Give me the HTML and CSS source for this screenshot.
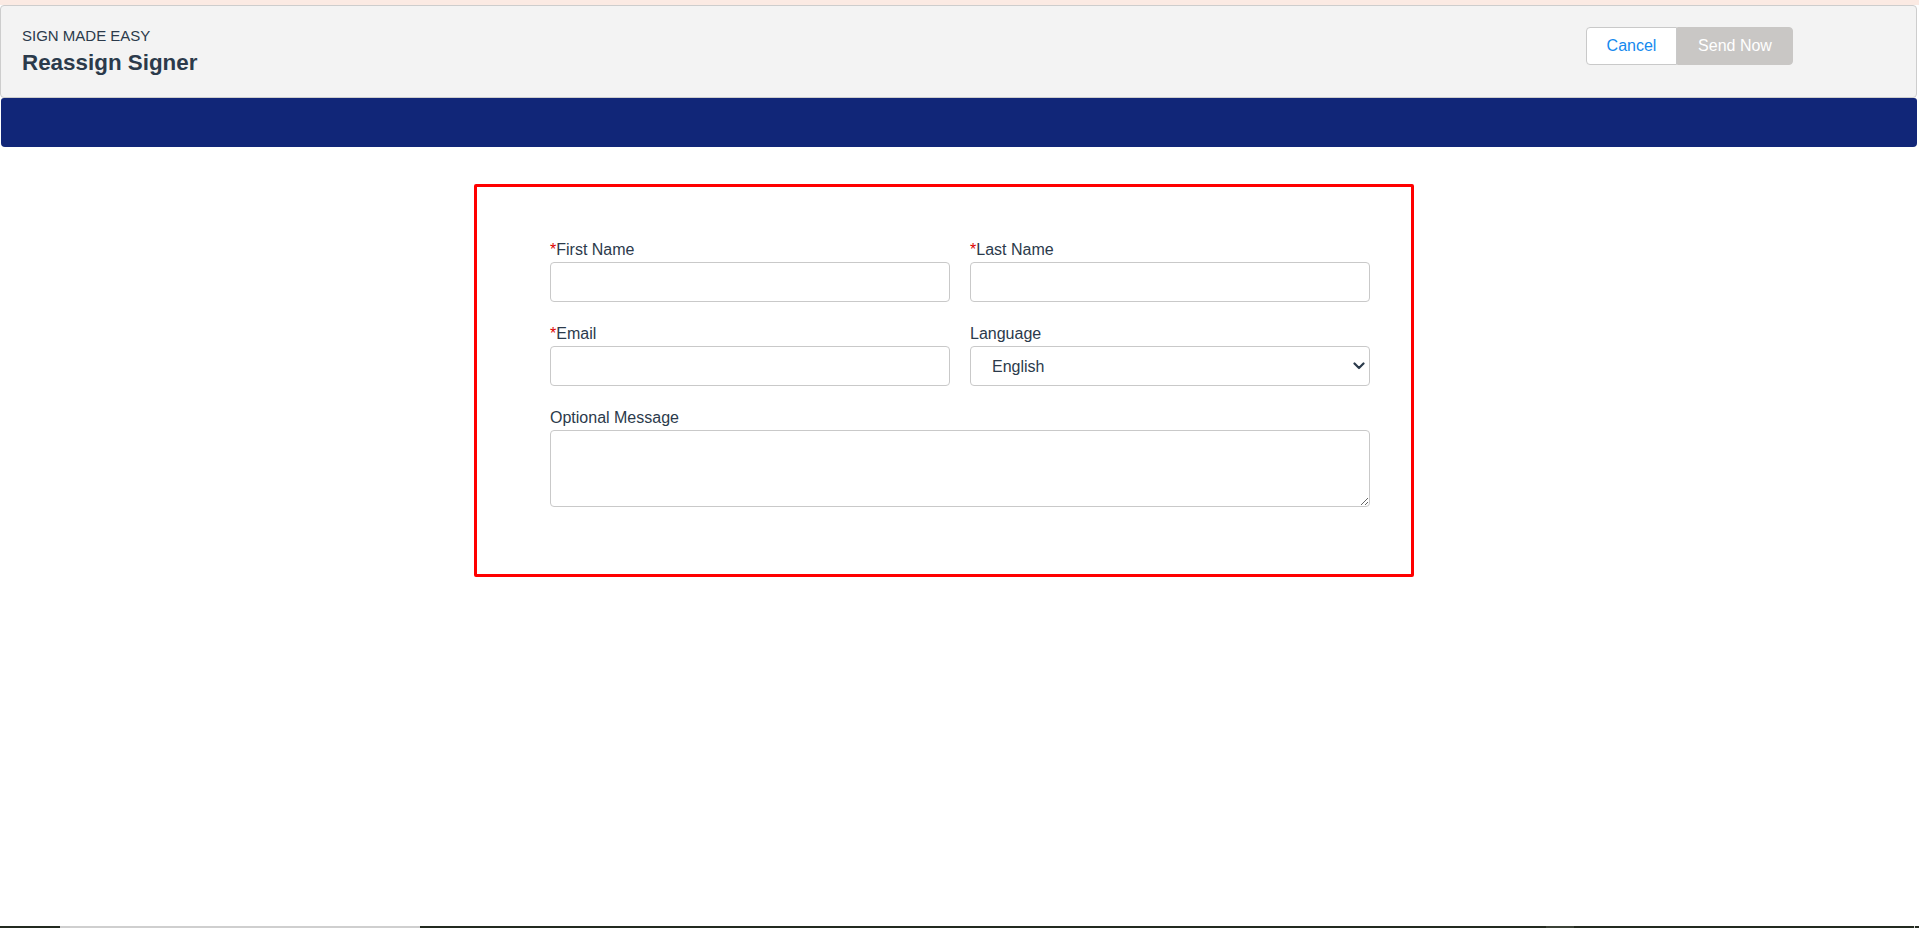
FILE: index.html
```html
<!DOCTYPE html>
<html lang="en">
<head>
  <meta charset="UTF-8" />
  <title>Reassign Signer</title>
  <link rel="stylesheet" href="styles.css">
</head>
<body>

  <div class="top-strip"></div>

  <header class="page-header">
    <div class="titles">
      <div class="app-name">SIGN MADE EASY</div>
      <h1 class="page-title">Reassign Signer</h1>
    </div>
    <div class="btn-group">
      <button class="btn btn-cancel">Cancel</button>
      <button class="btn btn-send" disabled>Send Now</button>
    </div>
  </header>

  <div class="nav-bar"></div>

  <main class="content">
    <form class="signer-form">
      <div class="field">
        <label><span class="req">*</span>First Name</label>
        <input type="text" />
      </div>
      <div class="field">
        <label><span class="req">*</span>Last Name</label>
        <input type="text" />
      </div>
      <div class="field">
        <label><span class="req">*</span>Email</label>
        <input type="email" />
      </div>
      <div class="field">
        <label>Language</label>
        <div class="select-wrap">
          <select>
            <option>English</option>
            <option>French</option>
            <option>German</option>
            <option>Spanish</option>
          </select>
          <svg class="chevron" width="12" height="8" viewBox="0 0 12 8">
            <path d="M1.5 1.5 L6 6 L10.5 1.5" fill="none" stroke="#2b3a4b" stroke-width="2.2" stroke-linecap="round" stroke-linejoin="round"/>
          </svg>
        </div>
      </div>
      <div class="field wide">
        <label>Optional Message</label>
        <textarea></textarea>
      </div>
    </form>
  </main>

  <div class="taskbar">
    <span class="tb-dark tb-start"></span>
    <span class="tb-light"></span>
    <span class="tb-dark tb-mid"></span>
    <span class="tb-active"></span>
    <span class="tb-dark tb-rest"></span>
    <span class="tb-tick"></span>
    <span class="tb-dark tb-end"></span>
  </div>

</body>
</html>
```

FILE: styles.css
```css
html, body {
  height: 100%;
}

body {
  margin: 0;
  font-family: "Liberation Sans", Arial, sans-serif;
  color: #2b3a4b;
  background: #fff;
  display: flex;
  flex-direction: column;
  overflow: hidden;
}

.top-strip {
  height: 5px;
  background: #fbeae3;
}

.page-header {
  height: 93px;
  box-sizing: border-box;
  margin-right: 2px;
  background: #f3f3f3;
  border: 1px solid #cdcdcd;
  border-radius: 4px;
  padding: 21px 123px 0 21px;
  display: flex;
  justify-content: space-between;
  align-items: flex-start;
}

.app-name {
  font-size: 15px;
  line-height: 18px;
}

.page-title {
  margin: 5px 0 0;
  font-size: 22.4px;
  line-height: 26px;
  font-weight: bold;
}

.btn-group {
  display: flex;
  margin-top: 0;
}

.btn {
  height: 38px;
  font-family: inherit;
  font-size: 16px;
  border: 1px solid #c9c9c9;
  padding: 0;
  cursor: pointer;
}

.btn-cancel {
  width: 91px;
  background: #fff;
  color: #1589ee;
  border-radius: 4px 0 0 4px;
}

.btn-send {
  width: 116px;
  background: #c9c7c5;
  border-color: #c9c7c5;
  color: #fff;
  border-radius: 0 4px 4px 0;
  cursor: default;
}

.nav-bar {
  height: 49px;
  margin: 0 2px 0 1px;
  background: #112678;
  border-radius: 3px 3px 4px 4px;
}

.content {
  flex: 1;
}

.signer-form {
  box-sizing: border-box;
  width: 940px;
  margin: 37px 0 0 474px;
  padding: 53px 41px 67px 73px;
  border: 3px solid #ff0000;
  border-radius: 2px;
  display: grid;
  grid-template-columns: 400px 400px;
  column-gap: 20px;
  row-gap: 22px;
}

.field {
  display: flex;
  flex-direction: column;
}

.field.wide {
  grid-column: 1 / 3;
}

.field label {
  font-size: 16px;
  line-height: 20px;
  margin-bottom: 2px;
}

.req {
  color: #e00000;
}

.field input,
.field select,
.field textarea {
  box-sizing: border-box;
  width: 100%;
  border: 1px solid #c9c9c9;
  border-radius: 4px;
  background: #fff;
  font-family: inherit;
  font-size: 16px;
  color: #2b3a4b;
  outline: none;
}

.field input {
  height: 40px;
  padding: 0 12px;
}

.select-wrap {
  position: relative;
}

.field select {
  height: 40px;
  padding: 0 30px 0 21px;
  appearance: none;
  -webkit-appearance: none;
}

.chevron {
  position: absolute;
  right: 5px;
  top: 16px;
  pointer-events: none;
}

.field textarea {
  height: 77px;
  padding: 8px 12px;
  resize: vertical;
}

.taskbar {
  height: 2px;
  display: flex;
}

.tb-dark {
  background: #232a20;
}

.tb-start {
  width: 60px;
}

.tb-light {
  width: 360px;
  background: #cfcfcf;
}

.tb-mid {
  width: 1126px;
}

.tb-active {
  width: 28px;
  background: #3b4237;
}

.tb-rest {
  flex: 1;
}

.tb-tick {
  width: 1px;
  background: #d8d8d8;
}

.tb-end {
  width: 4px;
}
```
